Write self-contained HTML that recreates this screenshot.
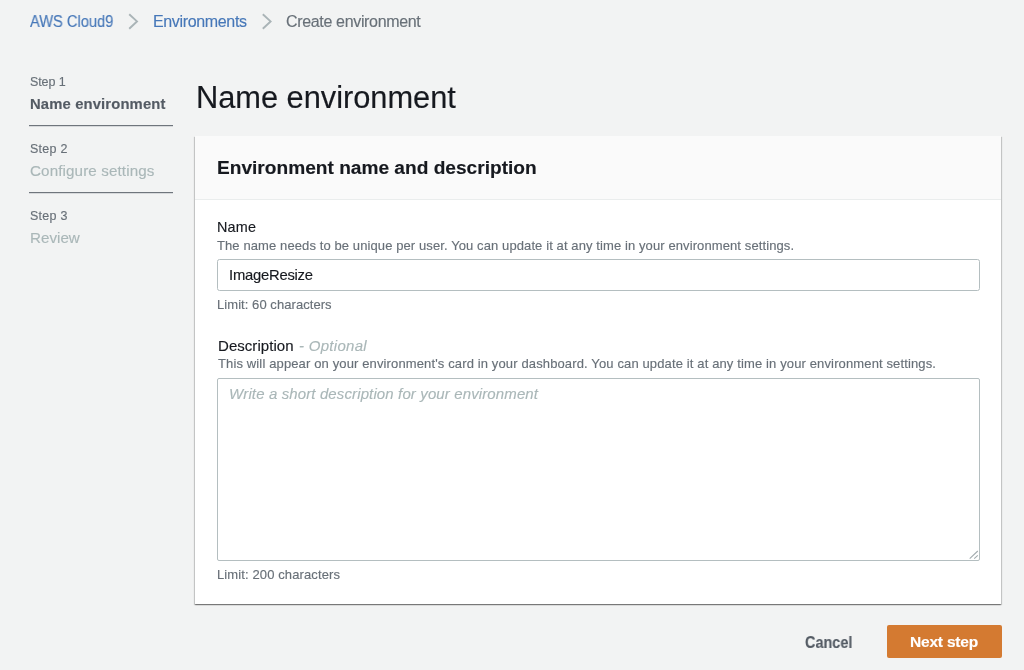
<!DOCTYPE html><html><head><meta charset='utf-8'><style>
*{margin:0;padding:0;box-sizing:border-box}
html,body{width:1024px;height:670px;overflow:hidden;background:#f2f3f3;font-family:"Liberation Sans",sans-serif}
.t{position:absolute;white-space:nowrap;line-height:1;-webkit-text-stroke:0.15px currentColor;will-change:transform}
.b{position:absolute}
</style></head><body>
<svg class='b' style='left:0;top:0' width='1024' height='670' viewBox='0 0 1024 670'>
 <path d='M129.2 14.2 L137 21.4 L129.2 28.8' fill='none' stroke='#aab4b7' stroke-width='1.9'/>
 <path d='M262.8 14.2 L270.6 21.4 L262.8 28.8' fill='none' stroke='#aab4b7' stroke-width='1.9'/>
 <rect x='29' y='125' width='144' height='1.2' fill='#6f757c'/>
 <rect x='29' y='192' width='144' height='1.2' fill='#6f757c'/>
</svg>
<div class='b' style='left:195px;top:136px;width:806px;height:468px;background:#fff;box-shadow:0 1px 1px 0 rgba(0,0,0,.32),1px 1px 1px 0 rgba(0,0,0,.14),-1px 1px 1px 0 rgba(0,0,0,.14)'></div>
<div class='b' style='left:195px;top:136px;width:806px;height:64px;background:#fafafa;border-bottom:1px solid #eaeded'></div>
<div class='b' style='left:217px;top:259px;width:763px;height:32px;background:#fff;border:1px solid #b4bec0;border-radius:2.5px'></div>
<div class='b' style='left:217px;top:378px;width:763px;height:183px;background:#fff;border:1px solid #b4bec0;border-radius:2px'></div>
<svg class='b' style='left:966px;top:546px' width='14' height='14' viewBox='0 0 14 14'>
 <path d='M3.7 12.7 L11.8 5 M8.2 12.7 L11.8 9.3' stroke='#a3acaf' stroke-width='1.1' fill='none'/>
</svg>
<div class='b' style='left:887px;top:625px;width:115px;height:33px;background:#d47a31;border-radius:2px'></div>
<div class='t' style='left:29.9px;top:14.23px;font-size:15.8px;font-weight:400;font-style:normal;color:#4677b8;transform:scaleX(0.9281);transform-origin:0 0;'>AWS Cloud9</div>
<div class='t' style='left:153.0px;top:14.06px;font-size:16.0px;font-weight:400;font-style:normal;color:#4677b8;letter-spacing:-0.348px;'>Environments</div>
<div class='t' style='left:286.0px;top:14.06px;font-size:16.0px;font-weight:400;font-style:normal;color:#687078;letter-spacing:-0.336px;'>Create environment</div>
<div class='t' style='left:30.2px;top:75.92px;font-size:12.5px;font-weight:400;font-style:normal;color:#687078;letter-spacing:-0.108px;'>Step 1</div>
<div class='t' style='left:30.2px;top:96.77px;font-size:14.8px;font-weight:700;font-style:normal;color:#545b64;letter-spacing:0.145px;'>Name environment</div>
<div class='t' style='left:30.2px;top:143.02px;font-size:12.5px;font-weight:400;font-style:normal;color:#687078;letter-spacing:0.272px;'>Step 2</div>
<div class='t' style='left:30.2px;top:163.03px;font-size:15.2px;font-weight:400;font-style:normal;color:#aab7b8;letter-spacing:0.116px;'>Configure settings</div>
<div class='t' style='left:30.2px;top:209.52px;font-size:12.5px;font-weight:400;font-style:normal;color:#687078;letter-spacing:0.272px;'>Step 3</div>
<div class='t' style='left:30.2px;top:229.63px;font-size:15.2px;font-weight:400;font-style:normal;color:#aab7b8;'>Review</div>
<div class='t' style='left:196.0px;top:82.53px;font-size:30.8px;font-weight:400;font-style:normal;color:#16191f;letter-spacing:-0.026px;'>Name environment</div>
<div class='t' style='left:217.3px;top:158.03px;font-size:19.1px;font-weight:700;font-style:normal;color:#16191f;letter-spacing:0.011px;'>Environment name and description</div>
<div class='t' style='left:217.4px;top:219.71px;font-size:14.4px;font-weight:400;font-style:normal;color:#16191f;letter-spacing:0.203px;'>Name</div>
<div class='t' style='left:217.4px;top:239.00px;font-size:13.0px;font-weight:400;font-style:normal;color:#687078;letter-spacing:0.101px;'>The name needs to be unique per user. You can update it at any time in your environment settings.</div>
<div class='t' style='left:228.9px;top:268.47px;font-size:14.8px;font-weight:400;font-style:normal;color:#16191f;letter-spacing:-0.236px;'>ImageResize</div>
<div class='t' style='left:217.4px;top:297.60px;font-size:13.0px;font-weight:400;font-style:normal;color:#687078;letter-spacing:0.061px;'>Limit: 60 characters</div>
<div class='t' style='left:217.5px;top:337.80px;font-size:15.0px;font-weight:400;font-style:normal;color:#16191f;letter-spacing:0.047px;'>Description</div>
<div class='t' style='left:298.9px;top:337.80px;font-size:15.0px;font-weight:400;font-style:italic;color:#aab7b8;letter-spacing:0.284px;'>- Optional</div>
<div class='t' style='left:217.5px;top:357.30px;font-size:13.0px;font-weight:400;font-style:normal;color:#687078;letter-spacing:0.132px;'>This will appear on your environment&#x27;s card in your dashboard. You can update it at any time in your environment settings.</div>
<div class='t' style='left:228.8px;top:385.70px;font-size:15.0px;font-weight:400;font-style:italic;color:#aab7b8;letter-spacing:0.123px;'>Write a short description for your environment</div>
<div class='t' style='left:216.9px;top:567.90px;font-size:13.0px;font-weight:400;font-style:normal;color:#687078;letter-spacing:0.116px;'>Limit: 200 characters</div>
<div class='t' style='left:805.2px;top:634.53px;font-size:15.8px;font-weight:700;font-style:normal;color:#545b64;transform:scaleX(0.9129);transform-origin:0 0;'>Cancel</div>
<div class='t' style='left:909.8px;top:633.78px;font-size:15.5px;font-weight:700;font-style:normal;color:#ffffff;letter-spacing:-0.198px;'>Next step</div></body></html>
